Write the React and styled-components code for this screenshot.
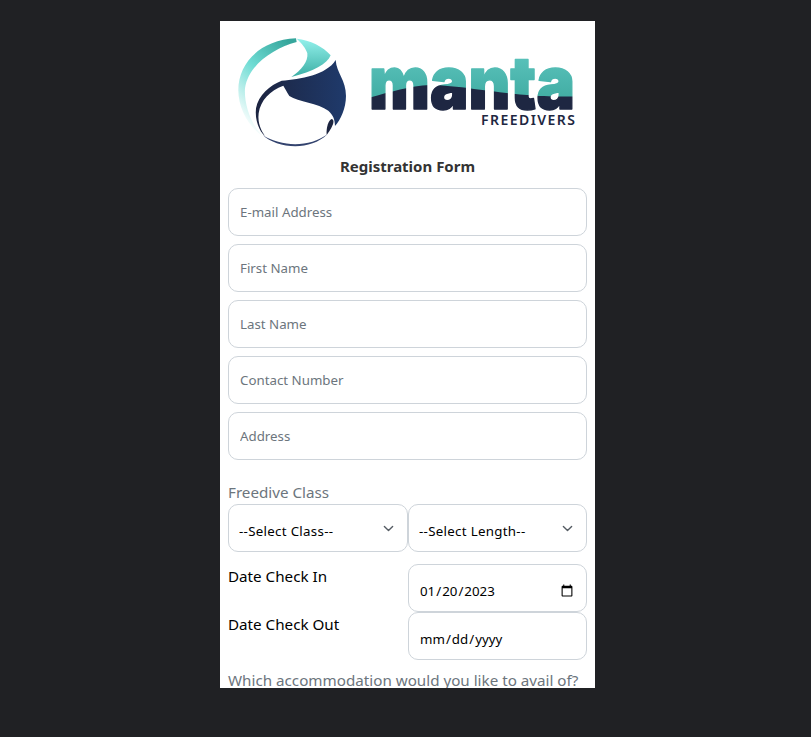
import styled, { createGlobalStyle } from 'styled-components'

const GlobalStyle = createGlobalStyle`
html, body {
  margin: 0;
  height: 100%;
  overflow: hidden;
  background: #202124;
}
`

const chevron = `url("data:image/svg+xml,%3csvg xmlns='http://www.w3.org/2000/svg' viewBox='0 0 16 16'%3e%3cpath fill='none' stroke='%23555c63' stroke-linecap='round' stroke-linejoin='round' stroke-width='2' d='M2 5l6 6 6-6'/%3e%3c/svg%3e")`

const Logo = () => (
    <LogoSvg viewBox="228 29 359 127">
        <defs>
            <linearGradient id="crescent" x1="0.8" y1="0" x2="0.2" y2="1">
                <stop offset="0" stopColor="#36a69c" />
                <stop offset="0.45" stopColor="#6fdcd4" />
                <stop offset="0.95" stopColor="#ffffff" />
            </linearGradient>
            <linearGradient id="wing" x1="0.5" y1="0" x2="0.5" y2="1">
                <stop offset="0" stopColor="#93f1ec" />
                <stop offset="1" stopColor="#3dafa5" />
            </linearGradient>
            <linearGradient id="body" x1="0" y1="0" x2="1" y2="0">
                <stop offset="0" stopColor="#1c2440" />
                <stop offset="1" stopColor="#1f3a6b" />
            </linearGradient>
            <linearGradient id="tealWord" x1="0" y1="0" x2="0" y2="1">
                <stop offset="0" stopColor="#62c9c3" />
                <stop offset="1" stopColor="#36a398" />
            </linearGradient>
            <pattern id="wordFill" patternUnits="userSpaceOnUse" x="360" y="40" width="230" height="80">
                <rect width="230" height="80" fill="url(#tealWord)" />
                <path d="M0 58 L10 57.500 C30 52 50 46 70 45 C95 45 130 52 167 55 C185 56.500 200 57 230 56 L230 80 L0 80 Z" fill="#1e2742" />
            </pattern>
        </defs>
        <g transform="translate(220 20) scale(0.3333)">
            <path d="M228 55 C120 60 55 130 55 210 C55 265 85 320 128 348 C90 310 72 250 75 205 C85 135 160 85 230 66 Z" fill="url(#crescent)" />
            <path d="M230 56 C270 60 310 80 332 106 C322 132 280 155 214 171 C245 150 265 125 262 100 C258 85 245 70 230 56 Z" fill="url(#wing)" />
            <path d="M185 182 C240 178 320 165 347 120 C350 160 378 180 378 228 C378 265 362 300 345 318 C345 300 340 285 325 272 C295 250 235 245 208 228 C200 215 195 205 190 197 C150 212 122 240 116 280 C112 310 125 335 135 348 C118 335 104 300 108 265 C115 225 150 195 185 182 Z" fill="url(#body)" />
            <path d="M320 345 C318 325 325 300 335 297 C345 300 342 315 320 345 Z" fill="#1c2440" />
            <path d="M128 345 C170 385 270 395 322 343 C270 382 185 382 128 345 Z" fill="#33436e" />
        </g>
        <WordMark x="369" y="109" textLength="206" lengthAdjust="spacingAndGlyphs" fill="url(#wordFill)" stroke="url(#wordFill)">manta</WordMark>
        <SubMark x="481" y="125" textLength="94" fill="#1e2742">FREEDIVERS</SubMark>
    </LogoSvg>
)

const App = () => {
    return (
        <Page>
            <GlobalStyle />
            <Card>
                <Logo />
                <Title>Registration Form</Title>
                <Fields>
                    <TextInput type="text" placeholder="E-mail Address" />
                    <TextInput type="text" placeholder="First Name" />
                    <TextInput type="text" placeholder="Last Name" />
                    <TextInput type="text" placeholder="Contact Number" />
                    <TextInput type="text" placeholder="Address" />
                </Fields>
                <SectionLabel>Freedive Class</SectionLabel>
                <SelectRow>
                    <Select defaultValue="">
                        <option value="">--Select Class--</option>
                    </Select>
                    <Select defaultValue="">
                        <option value="">--Select Length--</option>
                    </Select>
                </SelectRow>
                <DateGrid>
                    <DateLabel>Date Check In</DateLabel>
                    <DateInput type="date" defaultValue="2023-01-20" />
                    <DateLabel>Date Check Out</DateLabel>
                    <DateInput type="date" $noPicker />
                </DateGrid>
                <SectionLabel>Which accommodation would you like to avail of?</SectionLabel>
            </Card>
        </Page>
    )
}

export default App

const Page = styled.div`
padding: 21px 0 0 220px;
font-family: "Noto Sans", "Open Sans", sans-serif;
`
const Card = styled.div`
width: 375px;
height: 667px;
box-sizing: border-box;
padding: 8px;
background: #fff;
overflow: hidden;
`
const LogoSvg = styled.svg`
display: block;
width: 359px;
height: 127px;
`
const WordMark = styled.text`
font-family: "Inter", sans-serif;
font-weight: 900;
font-size: 74px;
stroke-width: 1.500px;
stroke-linejoin: round;
`
const SubMark = styled.text`
font-family: "Noto Sans", sans-serif;
font-weight: 600;
font-size: 14px;
`
const Title = styled.div`
height: 32px;
line-height: 20px;
text-align: center;
font-weight: 700;
font-size: 15px;
color: #333;
`
const Fields = styled.div`
display: flex;
flex-direction: column;
gap: 8px;
`
const TextInput = styled.input`
box-sizing: border-box;
width: 100%;
height: 48px;
padding: 0 11px;
border: 1px solid #ced4da;
border-radius: 10px;
background: #fff;
font: inherit;
font-size: 13.300px;
outline: none;

&::placeholder {
    color: #6c757d;
    opacity: 1;
}
`
const SectionLabel = styled.div`
margin-top: 20px;
line-height: 24px;
font-size: 15.200px;
color: #6c757d;
white-space: nowrap;
`
const SelectRow = styled.div`
display: grid;
grid-template-columns: 180px 179px;
`
const Select = styled.select`
box-sizing: border-box;
width: 100%;
height: 48px;
padding: 6px 30px 0 10px;
border: 1px solid #ced4da;
border-radius: 10px;
appearance: none;
background: #fff ${chevron} no-repeat right 13px top 18px / 11px 11px;
color: #000;
font: inherit;
font-size: 13.300px;
letter-spacing: 0.300px;
outline: none;
`
const DateGrid = styled.div`
display: grid;
grid-template-columns: 180px 179px;
margin-top: 12px;

& + ${SectionLabel} {
    margin-top: 8px;
}
`
const DateLabel = styled.div`
line-height: 24px;
font-size: 15.200px;
color: #000;
`
const DateInput = styled.input`
box-sizing: border-box;
width: 100%;
height: 48px;
padding: 6px 12px 0 10px;
border: 1px solid #ced4da;
border-radius: 10px;
background: #fff;
color: #000;
font: inherit;
font-size: 13.300px;
outline: none;

&::-webkit-calendar-picker-indicator {
    display: ${props => props.$noPicker ? 'none' : 'block'};
    width: 14px;
    height: 14px;
    padding: 0;
    margin: 0;
}
`
